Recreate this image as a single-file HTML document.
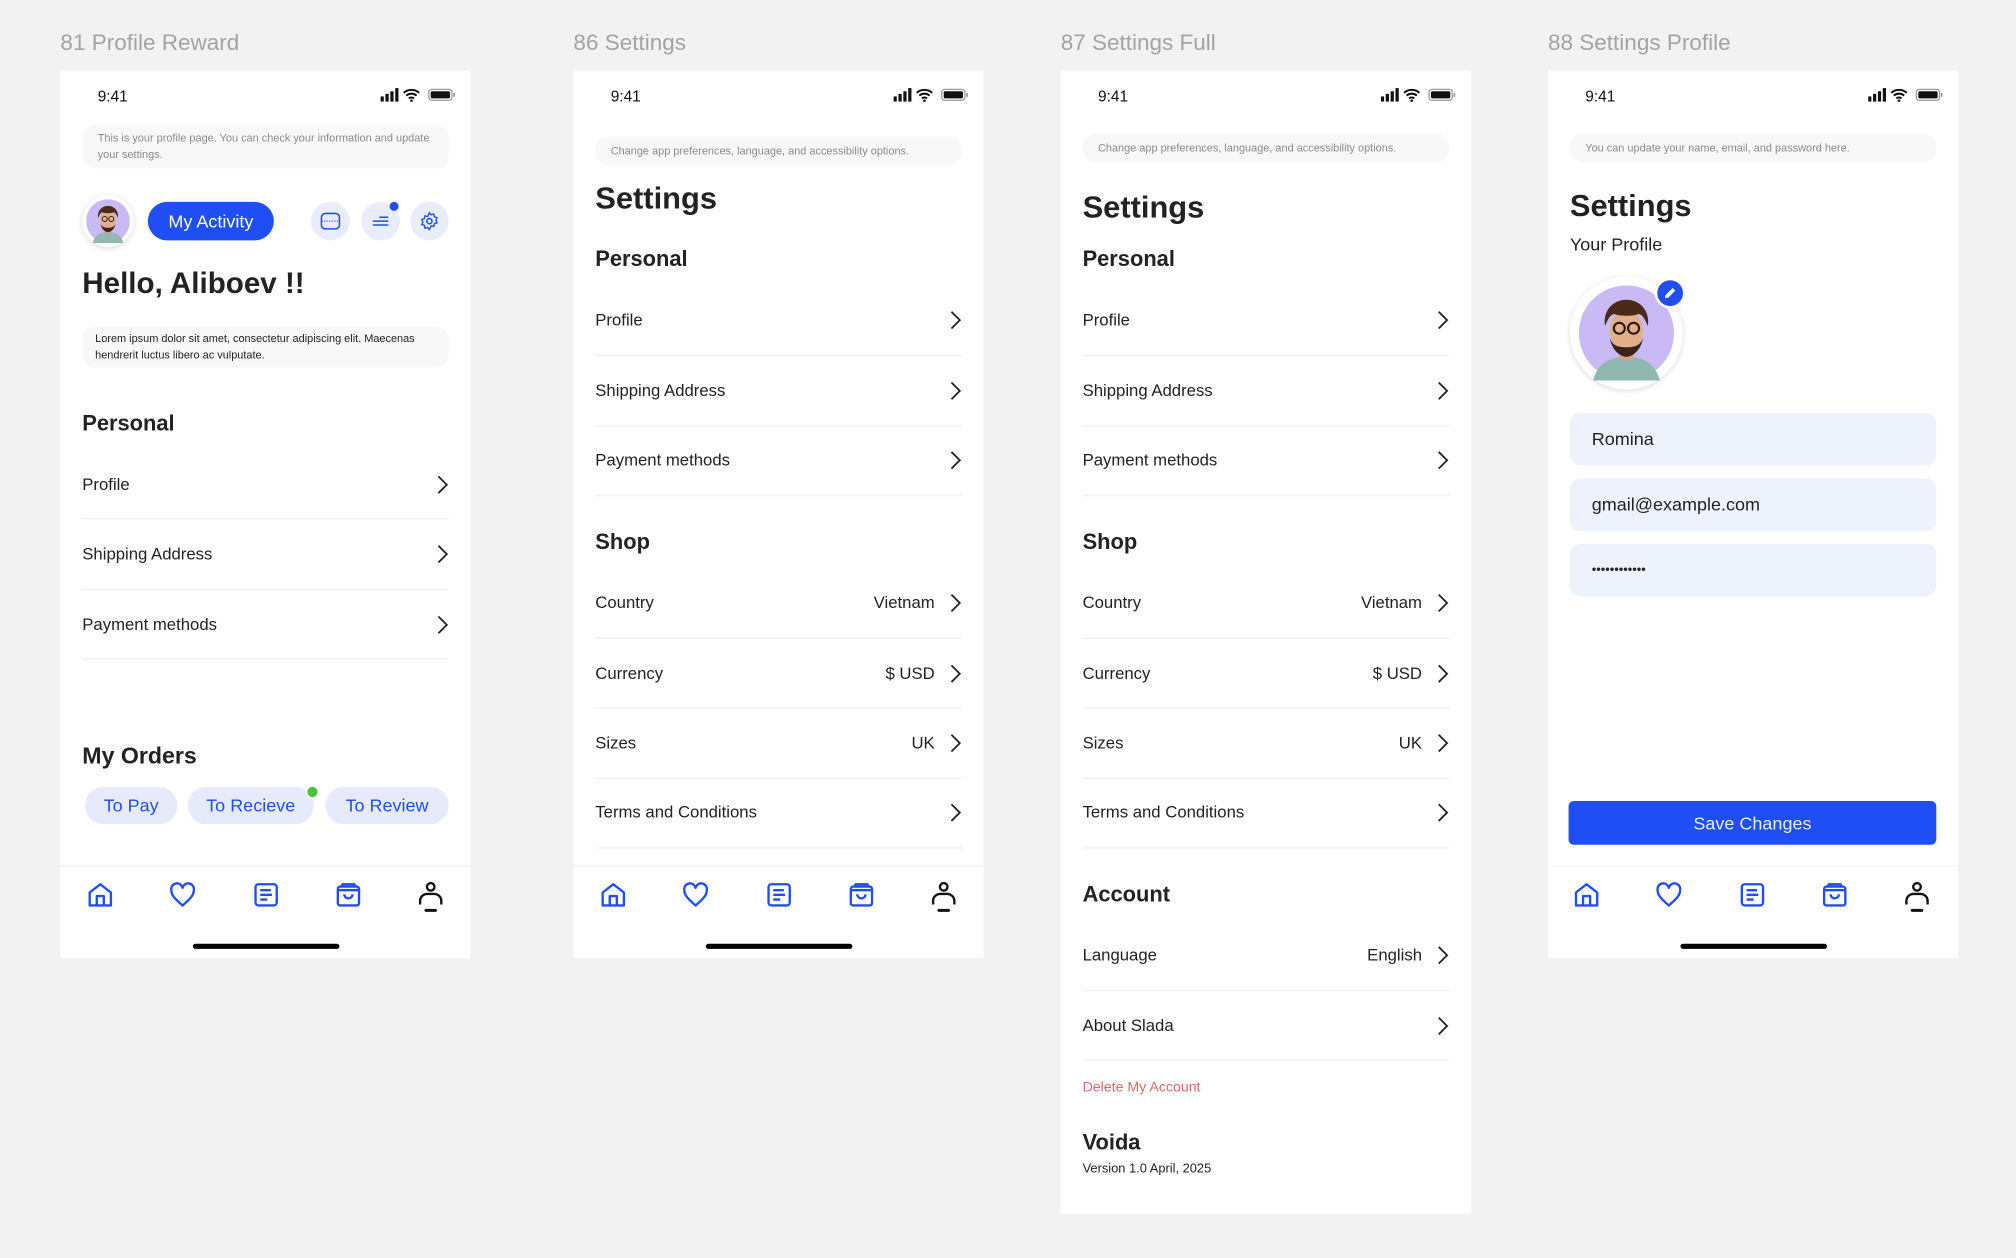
<!DOCTYPE html>
<html><head><meta charset="utf-8">
<style>
*{margin:0;padding:0;box-sizing:border-box}
html,body{width:2016px;height:1258px;overflow:hidden;background:#f2f2f2;font-family:"Liberation Sans",sans-serif}
#w{position:absolute;left:0;top:0;width:1568px;height:978px;transform:scale(1.285714);transform-origin:0 0}
.h{position:absolute;top:23px;font-size:17.5px;color:#a3a3a3}
.p{position:absolute;top:55px;width:319px;height:690px;background:#fff;overflow:hidden}
.a{position:absolute}
.tm{position:absolute;left:29px;top:13px;font-size:12px;color:#111}
.sb{position:absolute;left:249px;top:13px}
.info{position:absolute;left:17px;width:285px;background:#f8f8f8;border-radius:10px;font-size:8.5px;color:#8a8a8a;padding:0 12px;display:flex;align-items:center;line-height:13px}
.big{position:absolute;left:17px;font-size:24px;font-weight:bold;color:#222}
.sec{position:absolute;left:17px;font-size:17px;font-weight:bold;color:#222}
.r{position:absolute;left:17px;width:285px;height:20px;line-height:20px;font-size:13px;color:#222}
.r .v{position:absolute;right:21px;top:0}
.r svg{position:absolute;right:0;top:2px}
.sep{position:absolute;left:17px;width:285px;height:1px;background:#efefef}
.tab{position:absolute;left:0;top:618px;width:319px;height:1px;background:#ececec}
.ti{position:absolute;top:630px}
.hi{position:absolute;left:103px;top:679px;width:114px;height:4px;border-radius:2px;background:#000}
.in{position:absolute;left:17px;width:285px;height:41px;border-radius:8px;background:#eef2fd;font-size:14px;color:#222;padding-left:17px;line-height:41px}
</style></head><body><div id="w">

<div class="h" style="left:47px">81 Profile Reward</div>
<div class="h" style="left:446px">86 Settings</div>
<div class="h" style="left:825px">87 Settings Full</div>
<div class="h" style="left:1204px">88 Settings Profile</div>

<svg width="0" height="0" style="position:absolute">
<defs>
<symbol id="sbar" viewBox="0 0 58 12"><rect x="0" y="7" width="2.5" height="4" fill="#111"/><rect x="3.8" y="5" width="2.5" height="6" fill="#111"/><rect x="7.6" y="3" width="2.5" height="8" fill="#111"/><rect x="11.4" y="0.5" width="2.5" height="10.5" fill="#111"/><path d="M18 4.2a9 9 0 0 1 12 0M20 6.4a6 6 0 0 1 8 0M22 8.6a3 3 0 0 1 4 0" stroke="#111" stroke-width="1.6" fill="none"/><circle cx="24" cy="10.3" r="1" fill="#111"/><rect x="37.5" y="1.5" width="18" height="8.5" rx="2.3" fill="none" stroke="#999" stroke-width="1"/><rect x="39" y="3" width="15" height="5.5" rx="1.2" fill="#111"/><rect x="56.5" y="4.3" width="1.3" height="3" fill="#999"/></symbol>
<symbol id="ch" viewBox="0 0 10 16"><path d="M2 1.5l6.5 6.5L2 14.5" stroke="#222" stroke-width="1.4" fill="none"/></symbol>
<symbol id="home" viewBox="0 0 24 24"><path d="M3 21V10l9-7 9 7v11zM9 21v-8h6v8" stroke="#1f4ef5" stroke-width="2" fill="none" stroke-linejoin="round"/></symbol>
<symbol id="heart" viewBox="0 0 24 24"><path d="M12 21C5 15 2.5 12 2.5 8.3A4.8 4.8 0 0 1 12 6a4.8 4.8 0 0 1 9.5 2.3C21.5 12 19 15 12 21z" stroke="#1f4ef5" stroke-width="2" fill="none" stroke-linejoin="round"/></symbol>
<symbol id="doc" viewBox="0 0 24 24"><rect x="3" y="3" width="18" height="18" rx="2.5" stroke="#1f4ef5" stroke-width="2" fill="none"/><path d="M7 8h9M7 12h10M7 16h6" stroke="#1f4ef5" stroke-width="2"/></symbol>
<symbol id="bag" viewBox="0 0 24 24"><rect x="3" y="5" width="18" height="16" rx="2" stroke="#1f4ef5" stroke-width="2" fill="none"/><path d="M3 8h18M6 5l1-2h10l1 2M8.5 11.5a3.5 3.5 0 0 0 7 0" stroke="#1f4ef5" stroke-width="2" fill="none"/></symbol>
<symbol id="user" viewBox="0 0 24 28"><circle cx="12" cy="5" r="3.2" stroke="#111" stroke-width="2" fill="none"/><path d="M3 20v-3a6 6 0 0 1 6-6h6a6 6 0 0 1 6 6v3" stroke="#111" stroke-width="2" fill="none"/><path d="M8 25h8" stroke="#111" stroke-width="2.6" stroke-linecap="round"/></symbol>
<symbol id="face" viewBox="0 0 40 40"><circle cx="20" cy="20" r="20" fill="#c9b9f5"/><path d="M6 40c2-8 8-10 14-10s12 2 14 10z" fill="#8fb9b0"/><rect x="17" y="24" width="6" height="7" fill="#d9a07f"/><ellipse cx="20" cy="19" rx="7" ry="8.5" fill="#e2ae8c"/><path d="M13 22c1 6 5 8 7 8s6-2 7-8c-1 3-3 4-7 4s-6-1-7-4z" fill="#3a2418"/><path d="M11 17c-1-6 3-11 9-11s10 5 9 11c-1-2-2-5-4-5-2 1-8 1-10 0-2 0-3 3-4 5z" fill="#4a2a18"/><circle cx="17" cy="18" r="2.3" fill="none" stroke="#2a1a10" stroke-width=".9"/><circle cx="23" cy="18" r="2.3" fill="none" stroke="#2a1a10" stroke-width=".9"/></symbol>
</defs></svg>

<!-- Panel 1 -->
<div class="p" style="left:47px">
<div class="tm">9:41</div><svg class="sb" width="58" height="12"><use href="#sbar"/></svg>
<div class="info" style="top:42px;height:34px">This is your profile page. You can check your information and update your settings.</div>
<div class="a" style="left:17px;top:97px;width:40px;height:40px;border-radius:50%;background:#fff;box-shadow:0 1px 5px rgba(0,0,0,.15);padding:3px"><svg width="34" height="34"><use href="#face"/></svg></div>
<div class="a" style="left:68px;top:102px;width:98px;height:30px;border-radius:15px;background:#1f4ef5;color:#fff;font-size:14px;text-align:center;line-height:30px">My Activity</div>
<div class="a" style="left:195px;top:102px;width:30px;height:30px;border-radius:50%;background:#e8ecfb"><svg class="a" style="left:7px;top:8px" width="16" height="14" viewBox="0 0 16 14"><rect x="1" y="1" width="14" height="12" rx="3" stroke="#1f4ef5" stroke-width="1.2" fill="none"/><path d="M1 7h14" stroke="#1f4ef5" stroke-width=".8" stroke-dasharray="1 1"/></svg></div>
<div class="a" style="left:234px;top:102px;width:30px;height:30px;border-radius:50%;background:#e8ecfb"><svg class="a" style="left:8px;top:11px" width="14" height="8"><path d="M6 1h7M1 4h12M1 7h12" stroke="#1f4ef5" stroke-width="1.2"/></svg></div>
<div class="a" style="left:256px;top:102px;width:7px;height:7px;border-radius:50%;background:#1f4ef5"></div>
<div class="a" style="left:272px;top:102px;width:30px;height:30px;border-radius:50%;background:#e8ecfb"><svg class="a" style="left:7px;top:7px" width="16" height="16" viewBox="0 0 24 24"><circle cx="12" cy="12" r="3" stroke="#1f4ef5" stroke-width="1.8" fill="none"/><path d="M12 2l2 2.6 3.2-.9.6 3.3 3.2 1-1.4 3 1.4 3-3.2 1-.6 3.3-3.2-.9L12 22l-2-2.6-3.2.9-.6-3.3-3.2-1 1.4-3-1.4-3 3.2-1 .6-3.3 3.2.9z" stroke="#1f4ef5" stroke-width="1.6" fill="none" stroke-linejoin="round"/></svg></div>
<div class="big" style="top:152px;font-size:23px">Hello, Aliboev !!</div>
<div class="info" style="top:199px;height:32px;color:#222;padding-left:10px">Lorem ipsum dolor sit amet, consectetur adipiscing elit. Maecenas hendrerit luctus libero ac vulputate.</div>
<div class="sec" style="top:265px">Personal</div>
<div class="r" style="top:312px">Profile<svg width="10" height="16"><use href="#ch"/></svg></div><div class="sep" style="top:348px"></div>
<div class="r" style="top:366px">Shipping Address<svg width="10" height="16"><use href="#ch"/></svg></div><div class="sep" style="top:403px"></div>
<div class="r" style="top:421px">Payment methods<svg width="10" height="16"><use href="#ch"/></svg></div><div class="sep" style="top:457px"></div>
<div class="sec" style="top:523px;font-size:18px">My Orders</div>
<div class="a" style="left:19px;top:557px;width:72px;height:29px;border-radius:15px;background:#e6eafb;color:#1f4ef5;font-size:14px;text-align:center;line-height:29px">To Pay</div>
<div class="a" style="left:99px;top:557px;width:98px;height:29px;border-radius:15px;background:#e6eafb;color:#1f4ef5;font-size:14px;text-align:center;line-height:29px">To Recieve</div>
<div class="a" style="left:191px;top:556px;width:10px;height:10px;border-radius:50%;background:#4cc13e;border:1.5px solid #fff"></div>
<div class="a" style="left:206px;top:557px;width:96px;height:29px;border-radius:15px;background:#e6eafb;color:#1f4ef5;font-size:14px;text-align:center;line-height:29px">To Review</div>
<div class="tab"></div>
<svg class="ti" style="left:20px" width="22" height="22"><use href="#home"/></svg>
<svg class="ti" style="left:84px" width="22" height="22"><use href="#heart"/></svg>
<svg class="ti" style="left:149px" width="22" height="22"><use href="#doc"/></svg>
<svg class="ti" style="left:213px" width="22" height="22"><use href="#bag"/></svg>
<svg class="ti" style="left:277px" width="22" height="26"><use href="#user"/></svg>
<div class="hi"></div>
</div>

<!-- Panel 2 -->
<div class="p" style="left:446px">
<div class="tm">9:41</div><svg class="sb" width="58" height="12"><use href="#sbar"/></svg>
<div class="info" style="top:51px;height:22px">Change app preferences, language, and accessibility options.</div>
<div class="big" style="top:86px">Settings</div>
<div class="sec" style="top:137px">Personal</div>
<div class="r" style="top:184px">Profile<svg width="10" height="16"><use href="#ch"/></svg></div><div class="sep" style="top:221px"></div>
<div class="r" style="top:239px">Shipping Address<svg width="10" height="16"><use href="#ch"/></svg></div><div class="sep" style="top:276px"></div>
<div class="r" style="top:293px">Payment methods<svg width="10" height="16"><use href="#ch"/></svg></div><div class="sep" style="top:330px"></div>
<div class="sec" style="top:357px">Shop</div>
<div class="r" style="top:404px">Country<span class="v">Vietnam</span><svg width="10" height="16"><use href="#ch"/></svg></div><div class="sep" style="top:441px"></div>
<div class="r" style="top:459px">Currency<span class="v">$ USD</span><svg width="10" height="16"><use href="#ch"/></svg></div><div class="sep" style="top:495px"></div>
<div class="r" style="top:513px">Sizes<span class="v">UK</span><svg width="10" height="16"><use href="#ch"/></svg></div><div class="sep" style="top:550px"></div>
<div class="r" style="top:567px">Terms and Conditions<svg width="10" height="16"><use href="#ch"/></svg></div><div class="sep" style="top:604px"></div>
<div class="tab" style="background:#f0f0f0"></div>
<div class="a" style="left:0;top:619px;width:319px;height:71px;background:#fff"></div>
<svg class="ti" style="left:20px" width="22" height="22"><use href="#home"/></svg>
<svg class="ti" style="left:84px" width="22" height="22"><use href="#heart"/></svg>
<svg class="ti" style="left:149px" width="22" height="22"><use href="#doc"/></svg>
<svg class="ti" style="left:213px" width="22" height="22"><use href="#bag"/></svg>
<svg class="ti" style="left:277px" width="22" height="26"><use href="#user"/></svg>
<div class="hi"></div>
</div>

<!-- Panel 3 -->
<div class="p" style="left:825px;height:889px">
<div class="tm">9:41</div><svg class="sb" width="58" height="12"><use href="#sbar"/></svg>
<div class="info" style="top:49px;height:22px">Change app preferences, language, and accessibility options.</div>
<div class="big" style="top:93px">Settings</div>
<div class="sec" style="top:137px">Personal</div>
<div class="r" style="top:184px">Profile<svg width="10" height="16"><use href="#ch"/></svg></div><div class="sep" style="top:221px"></div>
<div class="r" style="top:239px">Shipping Address<svg width="10" height="16"><use href="#ch"/></svg></div><div class="sep" style="top:276px"></div>
<div class="r" style="top:293px">Payment methods<svg width="10" height="16"><use href="#ch"/></svg></div><div class="sep" style="top:330px"></div>
<div class="sec" style="top:357px">Shop</div>
<div class="r" style="top:404px">Country<span class="v">Vietnam</span><svg width="10" height="16"><use href="#ch"/></svg></div><div class="sep" style="top:441px"></div>
<div class="r" style="top:459px">Currency<span class="v">$ USD</span><svg width="10" height="16"><use href="#ch"/></svg></div><div class="sep" style="top:495px"></div>
<div class="r" style="top:513px">Sizes<span class="v">UK</span><svg width="10" height="16"><use href="#ch"/></svg></div><div class="sep" style="top:550px"></div>
<div class="r" style="top:567px">Terms and Conditions<svg width="10" height="16"><use href="#ch"/></svg></div><div class="sep" style="top:604px"></div>
<div class="sec" style="top:631px">Account</div>
<div class="r" style="top:678px">Language<span class="v">English</span><svg width="10" height="16"><use href="#ch"/></svg></div><div class="sep" style="top:715px"></div>
<div class="r" style="top:733px">About Slada<svg width="10" height="16"><use href="#ch"/></svg></div><div class="sep" style="top:769px"></div>
<div class="a" style="left:17px;top:785px;font-size:11px;color:#d9686a">Delete My Account</div>
<div class="sec" style="top:824px">Voida</div>
<div class="a" style="left:17px;top:849px;font-size:10px;color:#222">Version 1.0 April, 2025</div>
</div>

<!-- Panel 4 -->
<div class="p" style="left:1204px">
<div class="tm">9:41</div><svg class="sb" width="58" height="12"><use href="#sbar"/></svg>
<div class="info" style="top:49px;height:22px">You can update your name, email, and password here.</div>
<div class="big" style="top:92px">Settings</div>
<div class="a" style="left:17px;top:127px;font-size:14px;color:#222">Your Profile</div>
<div class="a" style="left:17px;top:160px;width:88px;height:88px;border-radius:50%;background:#fff;box-shadow:0 1px 4px rgba(0,0,0,.15);padding:7px"><svg width="74" height="74"><use href="#face"/></svg></div>
<div class="a" style="left:83px;top:161px;width:24px;height:24px;border-radius:50%;background:#1f4ef5;border:2px solid #fff"><svg class="a" style="left:4px;top:4px" width="12" height="12" viewBox="0 0 12 12"><path d="M2 10l.5-2.5L8 2l2 2-5.5 5.5z" fill="#fff"/></svg></div>
<div class="in" style="top:266px">Romina</div>
<div class="in" style="top:317px">gmail@example.com</div>
<div class="in" style="top:368px;font-size:10px;letter-spacing:0">••••••••••••</div>
<div class="a" style="left:16px;top:568px;width:286px;height:34px;border-radius:4px;background:#1f4ef5;color:#e8ecff;font-size:14px;text-align:center;line-height:34px">Save Changes</div>
<div class="tab" style="background:#f5f5f5"></div>
<svg class="ti" style="left:19px" width="22" height="22"><use href="#home"/></svg>
<svg class="ti" style="left:83px" width="22" height="22"><use href="#heart"/></svg>
<svg class="ti" style="left:148px" width="22" height="22"><use href="#doc"/></svg>
<svg class="ti" style="left:212px" width="22" height="22"><use href="#bag"/></svg>
<svg class="ti" style="left:276px" width="22" height="26"><use href="#user"/></svg>
<div class="hi"></div>
</div>

</div></body></html>
